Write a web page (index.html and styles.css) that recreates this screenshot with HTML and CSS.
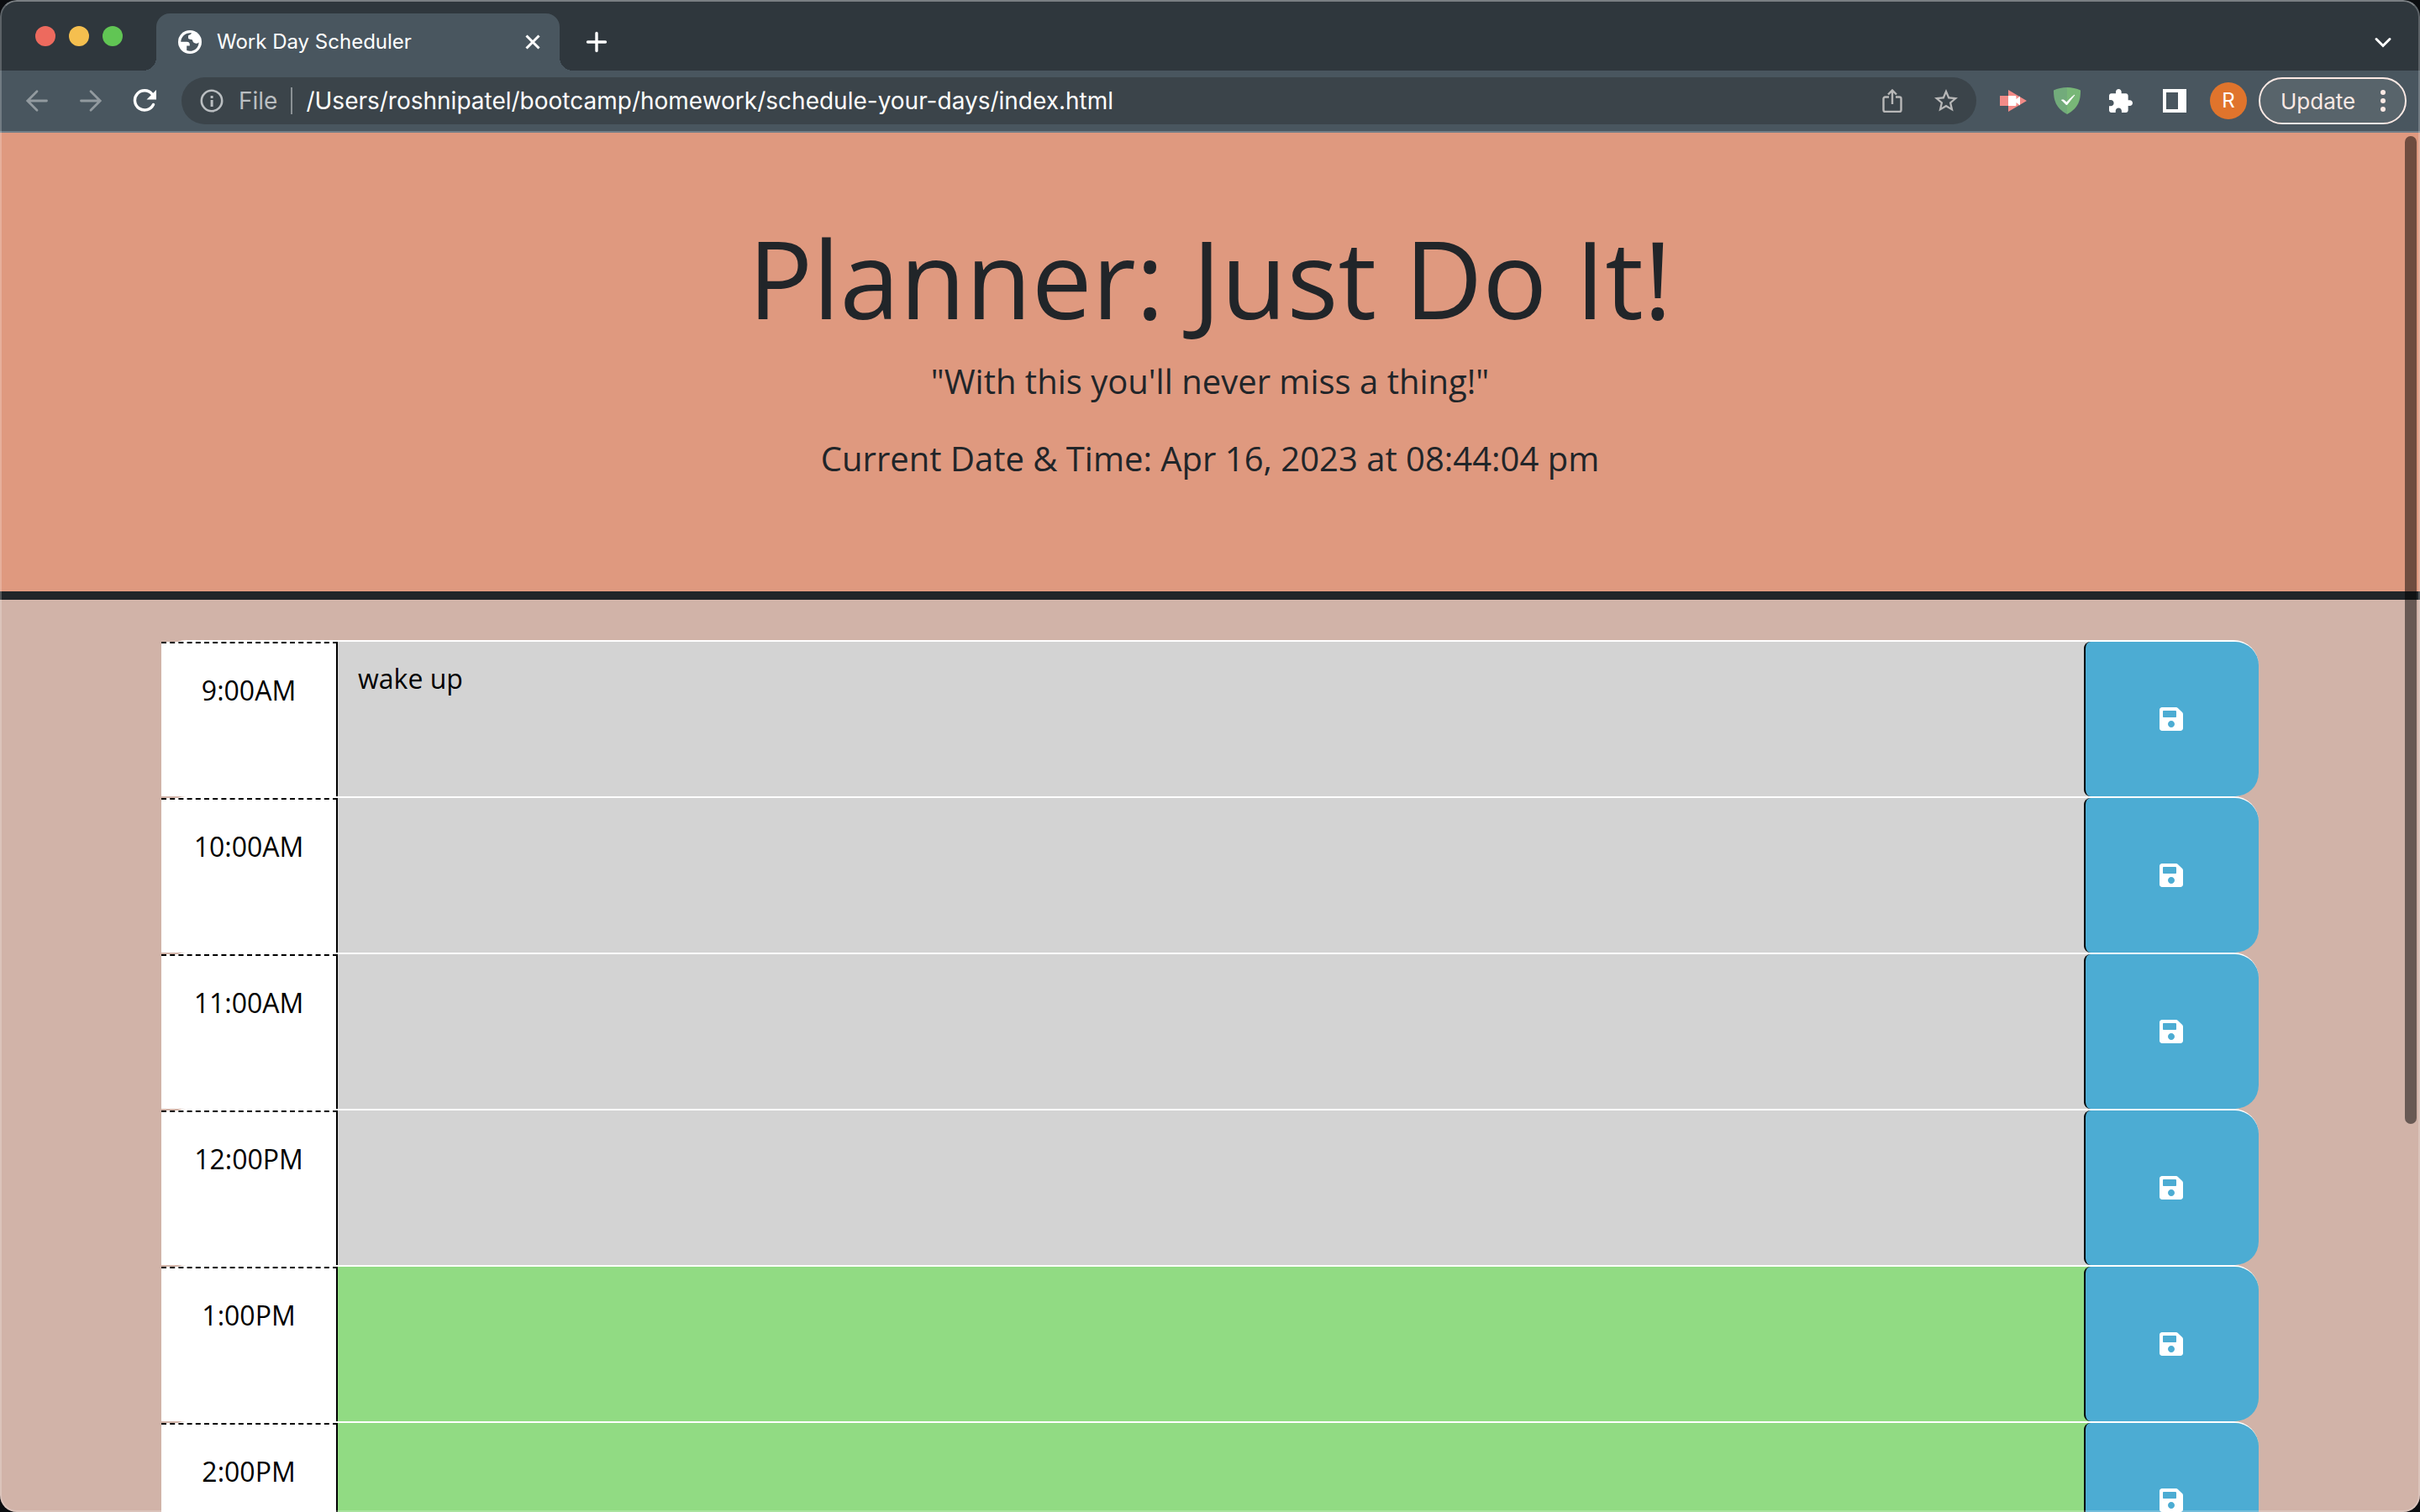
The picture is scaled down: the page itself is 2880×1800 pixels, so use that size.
FILE: index.html
```html
<!DOCTYPE html>
<html lang="en">
<head>
  <meta charset="utf-8">
  <meta name="viewport" content="width=device-width, initial-scale=1">
  <title>Work Day Scheduler</title>
  <link rel="stylesheet" href="styles.css">
</head>
<body>
  <svg class="symbols" aria-hidden="true">
    <symbol id="save" viewBox="0 0 448 512">
      <path d="M433.941 129.941l-83.882-83.882A48 48 0 0 0 316.118 32H48C21.49 32 0 53.49 0 80v352c0 26.51 21.49 48 48 48h352c26.51 0 48-21.49 48-48V163.882a48 48 0 0 0-14.059-33.941zM224 416c-35.346 0-64-28.654-64-64 0-35.346 28.654-64 64-64s64 28.654 64 64c0 35.346-28.654 64-64 64zm96-304.52V212c0 6.627-5.373 12-12 12H76c-6.627 0-12-5.373-12-12V108c0-6.627 5.373-12 12-12h228.52c3.183 0 6.235 1.264 8.485 3.515l3.48 3.48A11.996 11.996 0 0 1 320 111.48z"/>
    </symbol>
  </svg>

  <div class="window">
    <div class="tabstrip">
      <div class="lights">
        <button class="light light-close" type="button" aria-label="Close window"></button>
        <button class="light light-minimize" type="button" aria-label="Minimize window"></button>
        <button class="light light-zoom" type="button" aria-label="Zoom window"></button>
      </div>
      <div class="tab">
        <svg class="icon" viewBox="0 0 28 28" aria-hidden="true">
          <circle cx="14" cy="14" r="14" fill="#fff"/>
          <path d="M16 3.4C9 2.6 3.4 7.6 3.2 13.8h7.3c2 0 3.3 1.200 3.300 3.200v1.600h-3.600v5.400c6.800 2.700 14.200-2.200 14.400-9.600-1.700 1.500-4.600 1.800-6.300.2-1-1-.9-2.700-1.500-3.200-.7-.600-4.800-.3-4.800-2.400V6.800c0-1.500 3-1 4-3.400z" fill="#49565f"/>
        </svg>
        <span class="tab-title">Work Day Scheduler</span>
        <button class="plain" type="button" aria-label="Close tab">
          <svg class="icon" viewBox="0 0 28 28"><path d="M6.500 6.500l15 15M21.500 6.500l-15 15" fill="none" stroke="#fff" stroke-width="3"/></svg>
        </button>
      </div>
      <button class="plain new-tab" type="button" aria-label="New tab">
        <svg class="icon" viewBox="0 0 28 28"><path d="M14 3.500v21M3.500 14h21" fill="none" stroke="#fff" stroke-width="3.400" stroke-linecap="round"/></svg>
      </button>
      <button class="plain tab-search" type="button" aria-label="Search tabs">
        <svg class="icon" viewBox="0 0 28 28"><path d="M6 10.500l8 8 8-8" fill="none" stroke="#fff" stroke-width="3" stroke-linecap="round"/></svg>
      </button>
    </div>

    <div class="toolbar">
      <button class="tool" type="button" aria-label="Back">
        <svg class="icon" viewBox="0 0 28 28"><path d="M25.500 14H3M14 2.800L2.800 14 14 25.200" fill="none" stroke="#929a9f" stroke-width="2.800" stroke-linecap="round"/></svg>
      </button>
      <button class="tool" type="button" aria-label="Forward">
        <svg class="icon" viewBox="0 0 28 28"><path d="M2.500 14H25M14 2.800L25.200 14 14 25.200" fill="none" stroke="#929a9f" stroke-width="2.800" stroke-linecap="round"/></svg>
      </button>
      <button class="tool" type="button" aria-label="Reload">
        <svg class="icon" viewBox="0 0 28 28"><path d="M24.500 18.500A11.600 11.600 0 1 1 23 6" fill="none" stroke="#fff" stroke-width="3.400" stroke-linecap="round"/><path d="M28 1v11.500H16.500z" fill="#fff"/></svg>
      </button>

      <div class="omnibox">
        <svg class="icon" viewBox="0 0 28 28" aria-hidden="true"><circle cx="14" cy="14" r="12.200" fill="none" stroke="#babec1" stroke-width="2.600"/><path d="M12.600 8h3v3h-3zM12.600 13h3v8h-3z" fill="#babec1"/></svg>
        <label class="scheme" for="address">File</label>
        <input class="address" id="address" type="text" value="/Users/roshnipatel/bootcamp/homework/schedule-your-days/index.html">
        <button class="tool" type="button" aria-label="Share">
          <svg class="icon" viewBox="0 0 28 28"><path d="M10 9.500H5.500a2 2 0 0 0-2 2V25a2 2 0 0 0 2 2h17a2 2 0 0 0 2-2V11.500a2 2 0 0 0-2-2H18M14 18V2M9 6.500l5-5 5 5" fill="none" stroke="#b8b8b8" stroke-width="2.400"/></svg>
        </button>
        <button class="tool" type="button" aria-label="Bookmark this tab">
          <svg class="icon" viewBox="2 2 20 20"><path d="M22 9.240l-7.190-.62L12 2 9.190 8.630 2 9.240l5.460 4.730L5.820 21 12 17.270 18.180 21l-1.630-7.030L22 9.240zM12 15.400l-3.760 2.270 1-4.280-3.320-2.880 4.380-.38L12 6.100l1.710 4.040 4.380.38-3.320 2.880 1 4.280L12 15.400z" fill="#b8b8b8"/></svg>
        </button>
      </div>

      <button class="tool" type="button" aria-label="Screen recorder">
        <svg class="icon-large" viewBox="0 0 32 32"><path d="M0 10h10V3l22 13-22 13v-7H0z" fill="#f28b87"/><path d="M10 10h8c1 0 1.500.5 1.500 1.500v2.500l4.500-3.500v11l-4.500-3.500v2.500c0 1-.5 1.500-1.500 1.500h-8z" fill="#fff"/></svg>
      </button>
      <button class="tool" type="button" aria-label="Ad blocker">
        <svg class="icon-large" viewBox="0 0 32 32"><path d="M16 0C10.500 0 4.500 1.500 0 3.500 0 14 1.500 24 16 32z" fill="#72ab7b"/><path d="M16 0c5.500 0 11.500 1.500 16 3.500C32 14 30.500 24 16 32z" fill="#78b777"/><path d="M9.500 15l6 6L25 9c-3 2-6.500 5.500-9.500 9l-3.500-3z" fill="#fff" stroke="#fff"/></svg>
      </button>
      <button class="tool" type="button" aria-label="Extensions">
        <svg class="icon" viewBox="2 1 21 21"><path d="M20.500 11H19V7c0-1.100-.9-2-2-2h-4V3.500C13 2.120 11.880 1 10.500 1S8 2.120 8 3.500V5H4c-1.100 0-1.990.9-1.990 2v3.800H3.500c1.490 0 2.700 1.210 2.700 2.700s-1.210 2.700-2.700 2.700H2V20c0 1.100.9 2 2 2h3.800v-1.500c0-1.490 1.210-2.700 2.700-2.700 1.490 0 2.700 1.210 2.700 2.700V22H17c1.100 0 2-.9 2-2v-4h1.500c1.380 0 2.500-1.120 2.500-2.500S21.880 11 20.500 11z" fill="#fff"/></svg>
      </button>
      <button class="tool" type="button" aria-label="Side panel">
        <svg class="icon" viewBox="0 0 28 28"><path d="M0 0h28v28H0zM4 4v20h14V4z" fill="#fff" fill-rule="evenodd"/></svg>
      </button>
      <button class="tool" type="button" aria-label="Profile"><span class="avatar">R</span></button>
      <button class="update" type="button">
        Update
        <svg class="icon" viewBox="0 0 28 28" aria-hidden="true"><g fill="#fbe9e4"><circle cx="14" cy="4" r="3"/><circle cx="14" cy="14" r="3"/><circle cx="14" cy="24" r="3"/></g></svg>
      </button>
    </div>

    <div class="page">
      <header class="hero">
        <h1 class="title">Planner: Just Do It!</h1>
        <p class="lead">"With this you'll never miss a thing!"</p>
        <p class="lead">Current Date &amp; Time: Apr 16, 2023 at 08:44:04 pm</p>
      </header>

      <main class="schedule">
        <div class="block past">
          <label class="hour" for="hour-9">9:00AM</label>
          <textarea class="task" id="hour-9">wake up</textarea>
          <button class="save" type="button" aria-label="Save 9:00AM"><svg class="save-icon"><use href="#save"/></svg></button>
        </div>
        <div class="block past">
          <label class="hour" for="hour-10">10:00AM</label>
          <textarea class="task" id="hour-10"></textarea>
          <button class="save" type="button" aria-label="Save 10:00AM"><svg class="save-icon"><use href="#save"/></svg></button>
        </div>
        <div class="block past">
          <label class="hour" for="hour-11">11:00AM</label>
          <textarea class="task" id="hour-11"></textarea>
          <button class="save" type="button" aria-label="Save 11:00AM"><svg class="save-icon"><use href="#save"/></svg></button>
        </div>
        <div class="block past">
          <label class="hour" for="hour-12">12:00PM</label>
          <textarea class="task" id="hour-12"></textarea>
          <button class="save" type="button" aria-label="Save 12:00PM"><svg class="save-icon"><use href="#save"/></svg></button>
        </div>
        <div class="block future">
          <label class="hour" for="hour-13">1:00PM</label>
          <textarea class="task" id="hour-13"></textarea>
          <button class="save" type="button" aria-label="Save 1:00PM"><svg class="save-icon"><use href="#save"/></svg></button>
        </div>
        <div class="block future">
          <label class="hour" for="hour-14">2:00PM</label>
          <textarea class="task" id="hour-14"></textarea>
          <button class="save" type="button" aria-label="Save 2:00PM"><svg class="save-icon"><use href="#save"/></svg></button>
        </div>
      </main>
      <div class="scroll-thumb"></div>
    </div>
  </div>
</body>
</html>
```
FILE: styles.css
```css
* {
  box-sizing: border-box;
}

body {
  margin: 0;
  background: #0b0d10;
  font-family: "Open Sans", sans-serif;
}

button,
input,
textarea {
  margin: 0;
  padding: 0;
  border: 0;
  outline: 0;
  background: none;
  color: inherit;
  font: inherit;
}

.symbols {
  display: none;
}

/* Browser window */

.window {
  position: relative;
  display: flex;
  flex-direction: column;
  height: 100vh;
  overflow: hidden;
  border-radius: 20px;
  background: #2f373d;
  color: #fff;
}

.window::after {
  content: "";
  position: absolute;
  inset: 0;
  border: 2px solid rgba(255, 255, 255, 0.22);
  border-top-color: rgba(255, 255, 255, 0.36);
  border-radius: 20px;
  pointer-events: none;
}

.tabstrip {
  display: flex;
  align-items: flex-end;
  flex: none;
  height: 84px;
  padding-right: 30px;
  font-family: Inter, sans-serif;
}

.lights {
  display: flex;
  gap: 16px;
  width: 186px;
  height: 84px;
  padding: 31px 0 0 42px;
}

.light {
  width: 24px;
  height: 24px;
  border-radius: 50%;
}

.light-close {
  background: #ed6a5e;
}

.light-minimize {
  background: #f5bf4f;
}

.light-zoom {
  background: #61c554;
}

.tab {
  position: relative;
  display: flex;
  align-items: center;
  width: 480px;
  height: 68px;
  padding: 0 18px 0 26px;
  border-radius: 16px 16px 0 0;
  background: #49565f;
}

.tab::before,
.tab::after {
  content: "";
  position: absolute;
  bottom: 0;
  width: 16px;
  height: 16px;
}

.tab::before {
  right: 100%;
  background: radial-gradient(circle at 0 0, transparent 16px, #49565f 16px);
}

.tab::after {
  left: 100%;
  background: radial-gradient(circle at 100% 0, transparent 16px, #49565f 16px);
}

.tab-title {
  flex: 1;
  padding-left: 18px;
  font-size: 24px;
  line-height: 32px;
}

.icon {
  display: block;
  flex: none;
  width: 28px;
  height: 28px;
}

.icon-large {
  display: block;
  width: 32px;
  height: 32px;
}

.plain {
  display: flex;
  align-items: center;
  height: 68px;
}

.new-tab {
  margin-left: 30px;
}

.tab-search {
  margin-left: auto;
}

.toolbar {
  display: flex;
  align-items: center;
  flex: none;
  height: 74px;
  padding: 0 16px 0 12px;
  border-bottom: 2px solid #737f87;
  background: #49565f;
  font-family: Inter, sans-serif;
  font-size: 28px;
}

.tool {
  display: flex;
  align-items: center;
  justify-content: center;
  flex: none;
  width: 64px;
  height: 56px;
}

.omnibox {
  display: flex;
  align-items: center;
  flex: 1;
  height: 56px;
  margin: 0 12px;
  padding: 0 4px 0 22px;
  border-radius: 28px;
  background: #3b444a;
}

.scheme {
  margin-left: 18px;
  padding-right: 16px;
  border-right: 2px solid #8b9195;
  color: #babec1;
  line-height: 32px;
}

.address {
  flex: 1;
  min-width: 0;
  padding-left: 16px;
}

.avatar {
  width: 44px;
  height: 44px;
  border-radius: 50%;
  background: #e0742c;
  font-size: 24px;
  line-height: 44px;
  text-align: center;
}

.update {
  display: flex;
  align-items: center;
  justify-content: space-between;
  width: 176px;
  height: 56px;
  margin-left: 4px;
  padding: 0 12px 0 24px;
  border: 2px solid #fbe9e4;
  border-radius: 28px;
  background: #58646b;
  color: #fbe9e4;
  font-size: 26px;
}

/* Planner page */

.page {
  position: relative;
  flex: 1;
  min-height: 0;
  overflow: hidden;
  background: #d1b3a8;
  color: #212529;
}

.hero {
  padding: 96px 32px;
  border-bottom: 10px solid #212529;
  background: #df997f;
  text-align: center;
}

.title {
  margin: 0 0 16px;
  font-size: 128px;
  font-weight: 400;
  line-height: 154px;
}

.lead {
  margin: 0 0 32px;
  font-size: 40px;
  line-height: 60px;
}

.schedule {
  padding: 48px 192px 0;
  color: #000;
  font-size: 32px;
  line-height: 48px;
}

.block {
  display: grid;
  grid-template-columns: 210px 1fr 208px;
  min-height: 186px;
  border-top: 2px solid #fff;
  border-radius: 30px;
}

.past {
  background: #d3d3d3;
}

.future {
  background: #91db83;
}

.hour {
  padding-top: 32px;
  border-top: 2px dashed #000;
  border-right: 2px solid #000;
  background: #fff;
  text-align: center;
}

.task {
  padding: 20px 24px;
  resize: none;
}

.save {
  display: flex;
  align-items: center;
  justify-content: center;
  padding-right: 2px;
  border-left: 2px solid #000;
  border-radius: 8px 28px 28px 8px;
  background: #4cacd3;
}

.save-icon {
  width: 28px;
  height: 32px;
  fill: #fff;
}

/* Overlay scrollbar of the page */

.scroll-thumb {
  position: absolute;
  top: 4px;
  right: 4px;
  width: 14px;
  height: 1176px;
  border-radius: 7px;
  background: rgba(0, 0, 0, 0.5);
}
```
